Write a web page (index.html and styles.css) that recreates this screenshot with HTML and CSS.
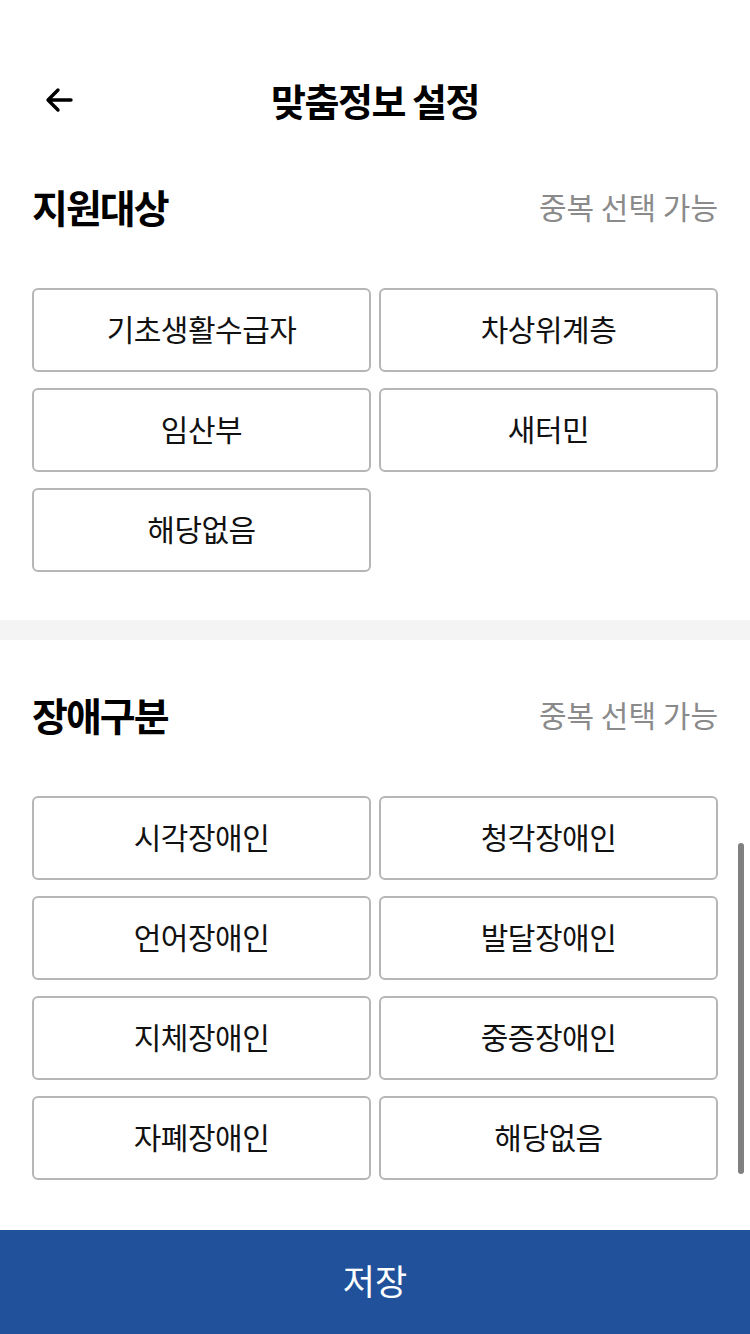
FILE: index.html
```html
<!DOCTYPE html>
<html>
    <head>
        <meta charset="utf-8">
        <meta name="viewport" content="width=device-width, initial-scale=1">
        <title>맞춤정보 설정</title>
        <link rel="stylesheet" href="styles.css">
    </head>
    <body>
        <div class="topbar">
            <button class="back" type="button" aria-label="뒤로">
                <svg width="30" height="30" viewBox="0 0 30 30">
                    <path d="M27 15H5M14 5L4 15l10 10" fill="none" stroke="#000" stroke-width="3.4" stroke-linecap="round" stroke-linejoin="round"/>
                </svg>
            </button>
            <h1 class="title">맞춤정보 설정</h1>
        </div>

        <div class="section">
            <div class="section-head">
                <h2>지원대상</h2>
                <span class="hint">중복 선택 가능</span>
            </div>
            <div class="options">
                <button class="option">기초생활수급자</button>
                <button class="option">차상위계층</button>
                <button class="option">임산부</button>
                <button class="option">새터민</button>
                <button class="option">해당없음</button>
            </div>
        </div>

        <div class="divider"></div>

        <div class="section">
            <div class="section-head">
                <h2>장애구분</h2>
                <span class="hint">중복 선택 가능</span>
            </div>
            <div class="options">
                <button class="option">시각장애인</button>
                <button class="option">청각장애인</button>
                <button class="option">언어장애인</button>
                <button class="option">발달장애인</button>
                <button class="option">지체장애인</button>
                <button class="option">중증장애인</button>
                <button class="option">자폐장애인</button>
                <button class="option">해당없음</button>
            </div>
        </div>

        <div class="scrollbar"></div>

        <button class="save" type="button">저장</button>
    </body>
</html>
```

FILE: styles.css
```css
body {
    margin: 0;
    background: #fff;
    font-family: "Noto Sans CJK KR", "Noto Sans", sans-serif;
    color: #000;
}

.topbar {
    position: relative;
    height: 64px;
    padding-top: 68px;
    display: flex;
    align-items: center;
    justify-content: center;
}
.topbar .back {
    position: absolute;
    left: 42px;
    top: 85px;
    width: 34px;
    height: 30px;
    padding: 0;
    border: none;
    background: none;
}
.title {
    margin: 0 0 2px 0;
    font-size: 38px;
    font-weight: 700;
    letter-spacing: -1.5px;
}

.section {
    padding: 48px 32px 48px;
}
.section-head {
    height: 52px;
    padding-bottom: 6px;
    display: flex;
    align-items: center;
    justify-content: space-between;
    margin-bottom: 50px;
}
.section-head h2 {
    margin: 0;
    font-size: 39px;
    font-weight: 700;
    letter-spacing: -2px;
}
.hint {
    font-size: 30px;
    color: #8a8a8a;
}

.options {
    display: grid;
    grid-template-columns: 1fr 1fr;
    column-gap: 8px;
    row-gap: 16px;
}
.option {
    height: 84px;
    border: 2px solid #b6b6b6;
    border-radius: 6px;
    background: #fff;
    font-family: inherit;
    font-size: 30px;
    color: #111;
    letter-spacing: -0.5px;
    padding: 0 0 5px 0;
}

.divider {
    height: 20px;
    background: #f4f4f4;
}

.scrollbar {
    position: fixed;
    right: 6px;
    top: 843px;
    width: 6px;
    height: 331px;
    border-radius: 3px;
    background: #808080;
}

.save {
    position: fixed;
    left: 0;
    bottom: 0;
    width: 100%;
    height: 104px;
    padding: 0 0 6px 0;
    border: none;
    background: #21519b;
    color: #fff;
    font-family: inherit;
    font-size: 35px;
}
```
